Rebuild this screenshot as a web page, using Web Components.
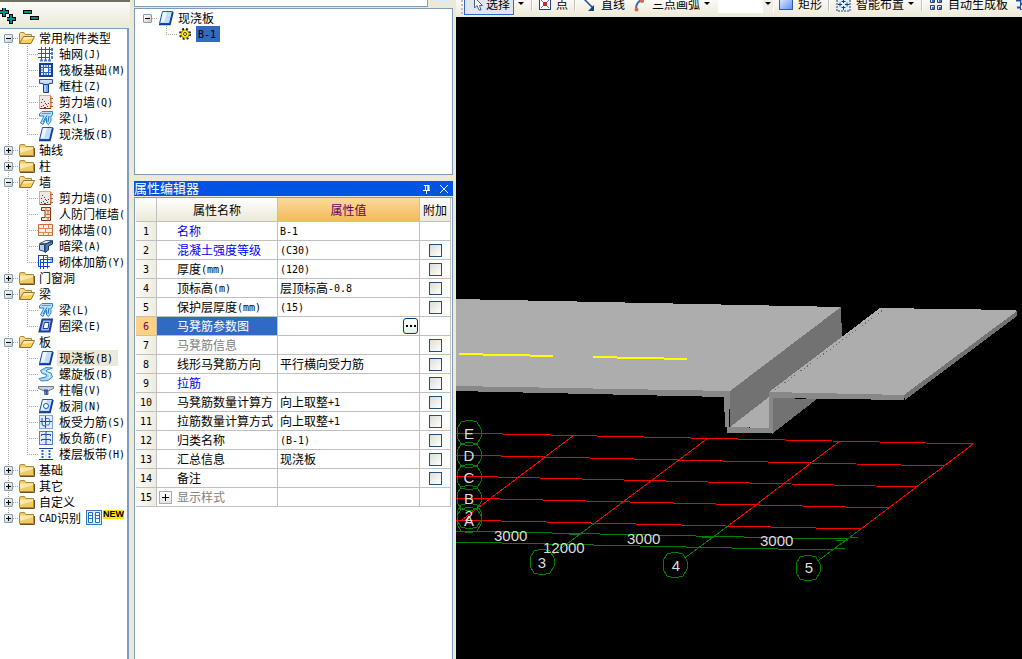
<!DOCTYPE html>
<html lang="zh-CN">
<head>
<meta charset="utf-8">
<title>现浇板 - 属性编辑器</title>
<style>
html,body{margin:0;height:100%;overflow:hidden}
body{font:12px/16px "Noto Sans CJK SC",sans-serif;color:#000;background:#ece9d8}
</style>
</head>
<body>
<cad-workspace>
  <nav-panel slot="nav"></nav-panel>
  <side-panel slot="side">
    <member-list></member-list>
    <property-editor></property-editor>
  </side-panel>
  <draw-toolbar slot="tools"></draw-toolbar>
  <model-view slot="view"></model-view>
</cad-workspace>
<script>
const svg = (body, w = 16, h = 16) => `<svg width="${w}" height="${h}" viewBox="0 0 ${w} ${h}" aria-hidden="true">${body}</svg>`;
const slabBody = '<path d="M4.500 1.500H14.500L11.500 13.500H1.500Z" fill="#c3dcfa" stroke="#1d52b4"/><path d="M5 2H9L6 12H3Z" fill="#eef6ff"/><path d="M1 14.500H12L15 2" fill="none" stroke="#0c3c9c" stroke-width="1.500"/>';
const ICONS = {
  closed: svg('<path d="M.500 3.500Q.500 2.500 1.500 2.500H5.500L7 4.500H14.500V13.500H.500Z" fill="#f0ca62" stroke="#b08932"/><path d="M1 5.500H14V7L1 11Z" fill="#fbe9a4"/><path d="M1 14.500H15.500V6" fill="none" stroke="#6b5220"/>'),
  open: svg('<path d="M.500 13.500V3.500L1.500 2.500H5L6.500 4.500H12.500V7" fill="#f4d98a" stroke="#b08932"/><path d="M4.500 6.500H15.500L12 13.500H.500Z" fill="#f6cf5c" stroke="#94702a"/><path d="M5 7H14.500L14 8.500L4 10Z" fill="#fdeeb0"/>'),
  axis: svg('<path d="M3.500 1V15M7.500 1V15M11.500 1V15M0 3.500H15M0 7.500H15M0 11.500H12" stroke="#2456b4" fill="none"/><path d="M2 14.500H5M6 14.500H9M10 14.500H13M14 2V5M14 6V9M14 10V13" stroke="#4a7ad8" stroke-width="2"/>'),
  raft: svg('<rect x="2" y="2" width="12" height="12" fill="#dbe9ff" stroke="#163f91" stroke-width="2"/><rect x="5.500" y="5.500" width="5" height="5" fill="#fff" stroke="#2c5fc0"/><path d="M8 3V5M8 11V13M3 8H5M11 8H13M3 5.500H13M3 10.500H13M5.500 3V13M10.500 3V13" stroke="#2c5fc0"/>'),
  column: svg('<path d="M1.500 1.500H14.500V5.500H11V6.500H5V5.500H1.500Z" fill="#b9d3fb" stroke="#2456b4"/><path d="M5.500 6.500H10.500V14.500H5.500Z" fill="#78a5ee" stroke="#163f91"/><path d="M3 3H13M7 7V14" stroke="#e8f2ff"/>'),
  shear: svg('<rect x="1.500" y="1.500" width="11" height="13" fill="#eee7e2" stroke="#d9a88e"/><path d="M4 5h1v1h-1zM3 8h1v1h-1zM6 7h1v1h-1zM8 10h1v1h-1zM5 11h1v1h-1zM9 12h1v1h-1zM3 12h1v1h-1zM7 9h1v1h-1zM10 9h1v1h-1zM6 13h2v1h-2z" fill="#444"/><path d="M13 2V14M12 4.500H15M12 8.500H15M12 12.500H15" stroke="#d05a18"/><path d="M2 14.500H13" stroke="#7a3a18"/>'),
  beam: svg('<path d="M1.500 4L4 1.500H14.500V5L13 6V11L10.500 14.500L8.500 13V8L5 14.500L2.500 13L6 6H1.500Z" fill="#bfe0fa" stroke="#2c86cc"/><path d="M4 3.500H13" stroke="#4a9ee0"/><path d="M5 12L9 5.500M10 12L11 6" stroke="#2c6cc0"/>'),
  slab: svg(slabBody),
  doorwall: svg('<path d="M3.500 1.500H12.500V14.500H3.500V11.500H7V4.500H3.500Z" fill="#ffe3cf" stroke="#8c2f10"/><path d="M8 1.500V4.500H12.500M8 8.500H12.500M8 11.500H12.500M10 5V8M10 11.500V14.500" stroke="#c9683b" fill="none"/>'),
  brick: svg('<path d="M.500 2.500H14.500V13.500H.500Z" fill="#fff0e2" stroke="#cc6a3c"/><path d="M1 6.500H14M1 10.500H14M5.500 3V6M10.500 3V6M7.500 7V10M5.500 11V13M10.500 11V13" stroke="#dd8757"/>'),
  hidden: svg('<path d="M1.500 5.500L8 2.500H14.500L8.500 5.500Z" fill="#e8edf5" stroke="#4c617e"/><path d="M1.500 6.500H6.500V13.500L1.500 12Z" fill="#b5d2f2" stroke="#27496f"/><path d="M7 6.500L14.500 3V6L10.500 8V12L7 14.500Z" fill="#4a7fc0" stroke="#17375e"/>'),
  rebarwall: svg('<path d="M.500 1.500H9.500V14.500M2.500 15V5.500H15M.500 1V12.500H12M5.500 1V15M9.500 3.500H14.500V8.500H2" stroke="#0c44d0" fill="none"/><path d="M7 3.500H13V8" stroke="#5a8ae0" fill="none"/>'),
  ring: svg('<path d="M4.500 1.500H14L11.500 13.500H1.500Z" fill="#9fbff5" stroke="#1c3f9c" stroke-width="2"/><path d="M6.500 4.500H11L10 10.500H5Z" fill="#fff" stroke="#1c3f9c"/>'),
  spiral: svg('<path d="M14.500 2L8 1.500L2.500 4.500L4 7.500L8.500 8.500L8 11L1 12.500L3 15L10 14.500L14.500 11L13 7L8 5.500L9 4Z" fill="#a9d6f8" stroke="#368bd0"/><path d="M5 5L12 8.500L11 12" stroke="#e7f6ff" fill="none"/>'),
  cap: svg('<path d="M.500 4.500H15.500V6.500L10 9V12.500H6.500V9L.500 6.500Z" fill="#ccd3db" stroke="#667788"/><path d="M6 8.500H10M8.500 9V13" stroke="#2456b4" stroke-width="2"/>'),
  hole: svg(slabBody + '<circle cx="8" cy="8" r="2.500" fill="#fff" stroke="#1d52b4"/>'),
  force: svg('<rect x="1.500" y="1.500" width="13" height="13" fill="#e1edff" stroke="#7ea5e6"/><path d="M2 7.500H14M7.500 2V14M4 4V10Q4 12 7 12" stroke="#1a4aac" fill="none"/><path d="M8 4.500H11Q13 8 11 11H7" fill="none" stroke="#4479d8"/>'),
  negative: svg('<rect x="1.500" y="1.500" width="13" height="13" fill="#e1edff" stroke="#4d7fd8"/><path d="M3.500 6V4.500H12.500V6M3.500 11V9.500H12.500V11M8 1V15" stroke="#1a4aac" fill="none"/>'),
  strip: svg('<path d="M1 2.500H15M1 13.500H15" stroke="#1a3f99"/><path d="M4.500 4V13M11.500 4V13" stroke="#2c64cc" stroke-dasharray="2 1" stroke-width="2"/><path d="M8 4V12" stroke="#c4d8f8"/>'),
  gear: svg('<circle cx="6" cy="6" r="5" fill="none" stroke="#222" stroke-width="2" stroke-dasharray="2 2"/><circle cx="6" cy="6" r="4" fill="#fff200" stroke="#8a7c00"/><path d="M6 1V11M1 6H11" stroke="#ffe800"/><circle cx="6" cy="6" r="1.500" fill="#fff" stroke="#443800"/>', 12, 12),
  cad: svg('<rect x=".500" y=".500" width="15" height="14" fill="#e3eefc" stroke="#3b76bd"/><path d="M2.500 2.500H6.500V12.500H2.500ZM9.500 2.500H13.500V12.500H9.500Z" fill="#fff" stroke="#1d6fc8"/><path d="M3 5.500H6M3 8.500H6M10 5.500H13M10 8.500H13" stroke="#1d6fc8"/>'),
  pointer: svg('<path d="M2.500 .500V11L5 8.500L7 13H9L7.500 8.500H10.500Z" fill="#fff" stroke="#435f8c"/>', 12, 14),
  point: svg('<rect x=".500" y="1.500" width="11" height="11" fill="#fff" stroke="#2b3f90"/><path d="M2 3L10 11M10 3L2 11" stroke="#5274c4"/><rect x="4" y="5" width="4" height="4" fill="#c52b35"/>', 12, 14),
  line: svg('<path d="M1 1L11 11" stroke="#23508e" stroke-width="1.500"/><path d="M12 8V14H6Z" fill="#164386"/>', 14, 15),
  arc: svg('<path d="M3 12Q3 5 10 2" stroke="#3470bc" fill="none" stroke-width="2"/><circle cx="3.500" cy="12.500" r="2" fill="#df6546"/><circle cx="9" cy="4" r="2" fill="#df6546"/>', 14, 15),
  rect: svg('<defs><linearGradient id="r" x2="1" y2="1"><stop stop-color="#e9f3ff"/><stop offset="1" stop-color="#5c8ff0"/></linearGradient></defs><rect x=".500" y=".500" width="13" height="12" fill="url(#r)" stroke="#3158b4"/>', 14, 14),
  smart: svg('<rect x="1" y="1" width="13" height="13" fill="#e1effa" stroke="#173c72" stroke-dasharray="2 1"/><path d="M7.500 2V6M5.500 4.500H9.500M7.500 9V13M5.500 10.500H9.500M2 7.500H6M9 7.500H13M4 5.500V9.500M11 5.500V9.500" stroke="#164080"/>', 15, 15),
  tiles: svg('<path d="M1.500 1.500H5.500V5.500H1.500ZM8.500 1.500H12.500V5.500H8.500ZM1.500 8.500H5.500V12.500H1.500ZM8.500 8.500H12.500V12.500H8.500Z" fill="#dce9ff" stroke="#2d3f66"/><path d="M3 3H5V5H3ZM10 3H12V5H10ZM3 10H5V12H3ZM10 10H12V12H10Z" fill="#3c70d8"/>', 14, 14),
  stack: svg('<path d="M0 4.500H16M1 11.500H15" stroke="#194fa2" stroke-width="2"/><rect x="4.500" y="1.500" width="7" height="6" fill="#7fb2ff" stroke="#194fa2"/><rect x="4.500" y="8.500" width="7" height="5" fill="#e9f3ff" stroke="#194fa2"/>')
};
/* Latin runs are set in a half-width face so that each letter takes half a Chinese character. */
const mix = t => t.replace(/[\x21-\x7e]+/g, m => `<span class="latin">${m}</span>`);
const LATIN = `.latin{font-family:"DejaVu Sans Mono",monospace;font-size:10px;line-height:12px;vertical-align:1px}`;
const BASE = `*{box-sizing:border-box}:host{box-sizing:border-box}svg{display:block;flex:none}button,select,input{font:inherit;color:inherit;margin:0;padding:0;border:0;background:none}${LATIN}`;
const define = (name, render) => customElements.define(name, class extends HTMLElement {
  connectedCallback() {
    if (!this.shadowRoot) this.attachShadow({mode: 'open'}).innerHTML = render(this);
  }
});

define('cad-workspace', () => `<style>
:host{display:grid;grid-template:auto minmax(0,1fr)/130px 326px minmax(0,1fr);grid-template-areas:"nav side tools" "nav side view";height:100vh}
slot{display:contents}
::slotted([slot=nav]){grid-area:nav}::slotted([slot=side]){grid-area:side}::slotted([slot=tools]){grid-area:tools}::slotted([slot=view]){grid-area:view}
</style><slot name="nav"></slot><slot name="side"></slot><slot name="tools"></slot><slot name="view"></slot>`);

define('side-panel', () => `<style>:host{display:flex;flex-direction:column;min-height:0;padding:0 3px 0 4px;background:#ece9d8}</style><slot></slot>`);

/* One line of a tree: child marks a leaf, edge tells where the dotted guides start or stop. */
define('tree-row', el => {
  const a = n => el.getAttribute(n);
  const child = el.hasAttribute('child');
  const dots = 'repeating-linear-gradient(#aca899 0 1px,transparent 1px 2px)';
  const half = {first: '1px 8px', last: '1px 8px'}[a('edge')] || '1px 16px';
  const y = a('edge') === 'first' ? '8px' : '0';
  const layers = [];
  if (!el.hasAttribute('bare')) layers.push(child ? (el.hasAttribute('outer') ? `${dots} 8px 0/1px 16px no-repeat` : 'none') : `${dots} 8px ${y}/${half} no-repeat`);
  if (child) layers.push(`${dots} 27px 0/${half} no-repeat`);
  return `<style>${BASE}
:host{display:flex;align-items:center;height:16px;white-space:nowrap;background:${layers.join(',') || 'none'};padding-left:${child ? 27 : 4}px}
button{width:9px;height:9px;flex:none;border:1px solid #7b9ebd;border-radius:1px;background:linear-gradient(135deg,#fff,#d2cdc0);display:block}
.dots{flex:none;height:1px;width:${child ? 11 : 6}px;background:repeating-linear-gradient(90deg,#aca899 0 1px,transparent 1px 2px)}
.label{padding:0 2px;margin-left:${child ? 3 : 2}px;line-height:16px;height:16px;${a('mark') ? `background:${a('mark')};padding-right:5px` : ''}}
slot{display:flex}
</style>${child ? '' : `<button aria-label="展开或折叠">${svg(`<path d="M1 3.500H6${a('icon') === 'closed' ? 'M3.500 1V6' : ''}" stroke="#000"/>`, 7, 7)}</button>`}<span class="dots"></span>${ICONS[a('icon')]}<span class="label">${mix(a('label'))}</span><slot></slot>`;
});

define('new-badge', () => `<style>
:host{display:flex;gap:1px;margin-left:3px}
b{height:9px;background:#ffe600;font:bold 9px/9px "Liberation Sans",sans-serif}
svg{display:block}
</style>${ICONS.cad}<b>NEW</b>`);

const TREE = [
  ['open','常用构件类型',[['axis','轴网(J)'],['raft','筏板基础(M)'],['column','框柱(Z)'],['shear','剪力墙(Q)'],['beam','梁(L)'],['slab','现浇板(B)']]],
  ['closed','轴线'],['closed','柱'],
  ['open','墙',[['shear','剪力墙(Q)'],['doorwall','人防门框墙('],['brick','砌体墙(Q)'],['hidden','暗梁(A)'],['rebarwall','砌体加筋(Y)']]],
  ['closed','门窗洞'],
  ['open','梁',[['beam','梁(L)'],['ring','圈梁(E)']]],
  ['open','板',[['slab','现浇板(B)','#ece9d8'],['spiral','螺旋板(B)'],['cap','柱帽(V)'],['hole','板洞(N)'],['force','板受力筋(S)'],['negative','板负筋(F)'],['strip','楼层板带(H)']]],
  ['closed','基础'],['closed','其它'],['closed','自定义'],['closed','CAD识别']
];
define('nav-panel', () => `<style>${BASE}
:host{display:flex;flex-direction:column;min-height:0;background:#ece9d8}
header{display:flex;gap:7px;height:28px;flex:none;padding-top:6px;border-top:2px solid #716f64;background:linear-gradient(#fbfaf6,#ece9d8)}
header button{display:block;height:16px}
.tree{flex:1;min-height:0;overflow:hidden;width:129px;padding-top:1px;border:solid #7f9db9;border-width:1px 2px 0 0;background:#fff}
</style><header><button aria-label="全部展开">${svg('<path d="M0 4H9M4 0V9M7 11H16M11 6V16" stroke="#000" stroke-width="4"/><path d="M0 4H8M4 0V8M7 11H15M11 7V15" stroke="#009090" stroke-width="2"/>')}</button><button aria-label="全部折叠">${svg('<path d="M0 4H9M7 10H16" stroke="#000" stroke-width="4"/><path d="M1 4H8M8 10H15" stroke="#009090" stroke-width="2"/>')}</button></header>
<div class="tree">${TREE.map(([icon, label, kids = []], i) => {
  const edge = i === 0 ? 'first' : i === TREE.length - 1 ? 'last' : '';
  return `<tree-row icon="${icon}" label="${label}" edge="${edge}">${edge === 'last' ? '<new-badge></new-badge>' : ''}</tree-row>` +
    kids.map(([k, t, mark = ''], j) => `<tree-row child outer icon="${k}" label="${t}" mark="${mark}" edge="${j === kids.length - 1 ? 'last' : ''}"></tree-row>`).join('');
}).join('')}</div>`);

define('member-list', () => `<style>${BASE}
:host{display:block;flex:none}
.search{display:flex;height:8px;gap:5px}
input{width:294px;height:7px;background:#fff;border:solid #7f9db9;border-width:0 1px 1px}
.search button{width:16px;height:2px;background:#d8ecfb}
.list{height:167px;padding:1px 0 0 4px;background:#fff;border:1px solid #7f9db9}
.member{display:flex;align-items:center;height:16px;padding-left:27px}
.guide{width:11px;height:9px;align-self:flex-start;border:dotted #aca899;border-width:0 0 1px 1px;margin-right:2px}
.name{margin-left:5px;padding:0 4px 0 2px;height:16px;background:#316ac5}
</style><div class="search"><input aria-label="查找构件"><button aria-label="查找"></button></div>
<div class="list"><tree-row bare icon="slab" label="现浇板"></tree-row><div class="member"><span class="guide"></span>${ICONS.gear}<span class="name">${mix('B-1')}</span></div></div>`);

const PROPS = [
  ['名称','B-1','key',0],['混凝土强度等级','(C30)','key',1],['厚度(mm)','(120)','',1],['顶标高(m)','层顶标高-0.8','',1],
  ['保护层厚度(mm)','(15)','',1],['马凳筋参数图','','current',0],['马凳筋信息','','dim',1],['线形马凳筋方向','平行横向受力筋','',1],
  ['拉筋','','key',1],['马凳筋数量计算方','向上取整+1','',1],['拉筋数量计算方式','向上取整+1','',1],['归类名称','(B-1)','',1],
  ['汇总信息','现浇板','',1],['备注','','',1],['显示样式','','dim group',0]
];
define('property-editor', () => `<style>${BASE}
:host{display:flex;flex-direction:column;flex:1;min-height:0;margin-top:6px}
header{display:flex;align-items:center;height:15px;flex:none;background:#0054e3;color:#fff;padding-right:4px;gap:8px}
h2{font-size:13px;line-height:14px;font-weight:400;margin:0;flex:1;align-self:flex-start}
.sheet{flex:1;min-height:0;margin-top:1px;border:1px solid #7f9db9;border-bottom:0;background:#fff;padding:0 1px}
table{table-layout:fixed;width:100%;border-collapse:separate;border-spacing:0}
th,td{padding:0;border:solid #c0c0c0;border-width:0 1px 1px 0;font-weight:400;height:19px;line-height:16px;white-space:nowrap;overflow:hidden;text-align:left}
thead th{height:24px;text-align:center;background:linear-gradient(#fff,#ece9d8)}
thead .value{background:linear-gradient(#fbd99b,#f2bb5b);color:#606}
tbody th{text-align:center;background:linear-gradient(90deg,#fcfbf8,#efecde)}
.name{padding-left:20px}.val{padding-left:2px}
.key .name{color:#00f}.dim .name{color:#808080}
.current .name{background:#316ac5;color:#fff}.current th{background:#ffd180;color:#606}
input{appearance:none;display:block;width:13px;height:13px;margin:0 auto;border:1px solid #1c5180;background:linear-gradient(135deg,#dcdcd7,#fff)}
.more{display:block;width:15px;height:16px;margin-left:auto;margin-right:1px;border:1px solid #003c74;border-radius:3px;background:linear-gradient(#fff,#ecebe5)}
.group .name{padding-left:2px}.group .name div{display:flex;align-items:center;gap:5px}
.plus{width:13px;height:13px;border:1px solid #aaa;background:linear-gradient(#fff,#e5e5e5);display:block}
</style><header><h2>属性编辑器</h2><button aria-label="固定">${svg('<path d="M3 1.500H8M4.500 1V6M7 1V6M2 6.500H9M5.500 7V10" stroke="#fff"/><path d="M7.500 1V6" stroke="#fff" stroke-width="2"/>', 10, 10)}</button><button aria-label="关闭">${svg('<path d="M1 1L9 9M9 1L1 9" stroke="#fff"/>', 10, 10)}</button></header>
<div class="sheet"><table><colgroup><col style="width:21px"><col style="width:121px"><col><col style="width:31px"></colgroup>
<thead><tr><th></th><th>属性名称</th><th class="value">属性值</th><th>附加</th></tr></thead><tbody>
${PROPS.map(([n, v, cls, box], i) => `<tr class="${cls}"><th scope="row">${mix(String(i + 1))}</th><td class="name">${cls.includes('group') ? `<div><button class="plus" aria-label="展开">${svg('<path d="M2 5.500H9M5.500 2V9" stroke="#000"/>', 11, 11)}</button><span>${n}</span></div>` : mix(n)}</td><td class="val">${cls === 'current' ? `<button class="more" aria-label="更多">${svg('<path d="M2 6H4V8H2ZM6 6H8V8H6ZM10 6H12V8H10Z"/>', 13, 14)}</button>` : mix(v)}</td><td>${box ? `<input type="checkbox" aria-label="附加 ${n}">` : ''}</td></tr>`).join('')}
</tbody></table></div>`);

define('tool-button', el => `<style>${BASE}
:host{display:flex;flex:none}
.main{display:flex;align-items:center;gap:5px;height:20px;white-space:nowrap}
:host([active]){margin-bottom:-1px}
:host([active]) .main{height:22px;padding:0 3px 0 7px;gap:2px;border:1px solid #316ac5;background:#e1e6ec}
.arrow{align-self:center;margin-left:4px;width:7px}
</style><button class="main">${ICONS[el.getAttribute('icon')]}<slot></slot></button>${el.hasAttribute('menu') ? `<button class="arrow" aria-label="菜单">${svg('<path d="M0 0H6L3 3Z"/>', 7, 4)}</button>` : ''}`);

define('draw-toolbar', () => `<style>${BASE}
:host{display:flex;align-items:flex-end;height:17px;min-width:0;overflow:hidden;padding:0 0 3px 5px;background:linear-gradient(#faf9f4,#ece9d8)}
hr{flex:none;width:2px;height:16px;margin:0 6px 3px;border:0;border-left:1px solid #c5c2b8;border-right:1px solid #fff}
.grip{flex:none;width:2px;height:18px;margin-right:1px;background:repeating-linear-gradient(#c1beb3 0 2px,transparent 2px 4px)}
select{appearance:none;flex:none;width:56px;height:22px;margin:0 5px 1px 7px;background:linear-gradient(#f1efe6,#f1efe6) right 1px top/10px 100% no-repeat #fff}
.combo{display:flex;position:relative}
.combo svg{position:absolute;right:7px;bottom:8px}
tool-button+tool-button{margin-left:8px}
</style><span class="grip"></span><tool-button icon="pointer" active menu>选择</tool-button><hr>
<tool-button icon="point">点</tool-button><hr>
<tool-button icon="line">直线</tool-button><tool-button icon="arc" menu>三点画弧</tool-button>
<span class="combo"><select aria-label="画弧参数"></select>${svg('<path d="M0 0H6L3 3Z"/>', 7, 4)}</span>
<tool-button icon="rect">矩形</tool-button><hr>
<tool-button icon="smart" menu>智能布置</tool-button><hr>
<tool-button icon="tiles">自动生成板</tool-button><tool-button icon="stack"></tool-button>`);

const ring = (cx, cy) => `<polygon points="${Array.from({length: 10}, (_, i) => {
  const t = i * Math.PI / 5 + Math.PI / 2;
  return Math.round(cx + 13 * Math.cos(t)) + ',' + Math.round(cy + 13 * Math.sin(t));
}).join(' ')}"/>`;
define('model-view', () => `<style>
:host{display:block;min-width:0;min-height:0;overflow:hidden;background:#000}
svg{display:block;width:100%;height:100%}
text{font:15px "Liberation Sans",sans-serif;fill:#ddd}
.mid{text-anchor:middle}
</style><svg viewBox="456 17 566 642" preserveAspectRatio="xMinYMin meet" role="img" aria-label="三维视图">
<g shape-rendering="crispEdges">
<path d="M456 299L841 307L730 391L456 386Z" fill="#adadad"/>
<path d="M841 307L842 338L769 392V398L730 428V391Z" fill="#727272"/>
<path d="M730 427L769 397V428Z" fill="#adadad"/>
<path d="M773 398L817 399L772 434Z" fill="#727272"/>
<path d="M456 386L730 391L729 427L769 428V392H773V433H727V427H725L724 397L456 391Z" fill="#888"/>
<path d="M880 308L1014 310L1017 311L904 396L769 392Z" fill="#adadad"/>
<path d="M1017 311V316L905 400L904 395Z" fill="#727272"/>
<path d="M769 392L904 395V400L773 398Z" fill="#888"/>
<path d="M775 390L883 310" stroke="#686868" stroke-dasharray="1 3"/>
<path d="M459 354L553 356M593 357L687 359" stroke="#ff0" stroke-width="2"/>
<path d="M456 433L973 444M456 455L945 466M456 476L917 487M456 498L889 508M456 520L861 529M973 444L861 529M840 441L728 526M708 438L595 523M574 435L462 520" stroke="#f00" fill="none"/>
<g stroke="#008000" fill="none">
<path d="M861 529L819 560M728 526L686 557M595 523L552 555M456 531L840 539L858 537M456 542L824 550L845 548M569 534H581M577 533H591M702 537H714M836 540H848"/>
${[[469,433],[469,455],[469,477],[469,498],[469,516],[469,520],[542,562],[675,565],[808,568]].map(p => ring(...p)).join('')}
</g></g>
<g class="mid"><text x="469" y="439">E</text><text x="469" y="461">D</text><text x="469" y="483">C</text><text x="469" y="504">B</text><text x="469" y="521">2</text><text x="469" y="526">A</text>
<text x="542" y="568">3</text><text x="676" y="571">4</text><text x="809" y="573">5</text></g>
<text x="494" y="541">3000</text><text x="543" y="553">12000</text><text x="627" y="544">3000</text><text x="760" y="546">3000</text>
</svg>`);
</script>
</body>
</html>
